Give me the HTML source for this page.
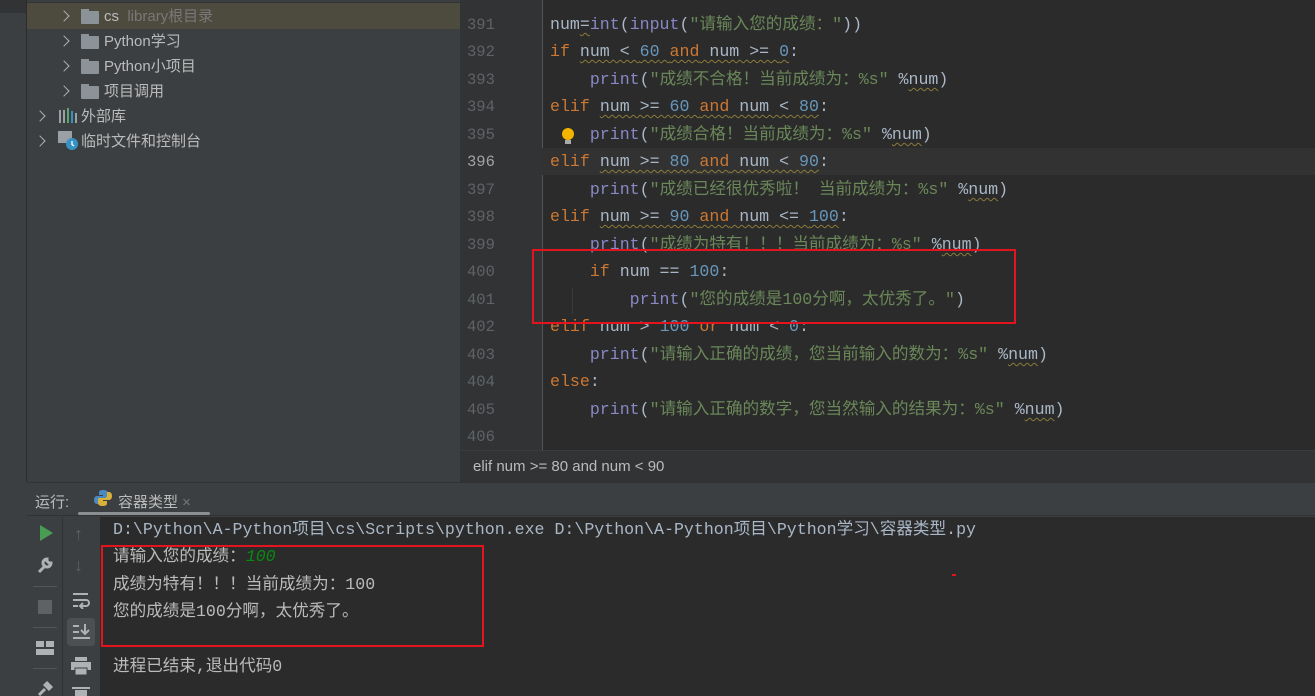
<!DOCTYPE html>
<html><head><meta charset="utf-8"><style>
*{margin:0;padding:0;box-sizing:border-box}
body{width:1315px;height:696px;overflow:hidden;background:#3c3f41;position:relative;font-family:"Liberation Sans","Noto Sans CJK SC",sans-serif;color:#bbbbbb}
.abs{position:absolute}
.mono{font-family:"Liberation Mono","Noto Sans CJK SC",monospace;font-size:16.6px;white-space:pre;line-height:20px;height:20px}
.tree{font-size:15px;color:#bbbbbb;white-space:nowrap;line-height:18px}
.chev{width:8px;height:8px;border-right:1.6px solid #aeb1b4;border-bottom:1.6px solid #aeb1b4;transform:rotate(-45deg)}
.fold{width:18px;height:13px;background:#8c9398;border-radius:1px}
.fold:before{content:"";position:absolute;left:0;top:-2px;width:8px;height:3px;background:#8c9398}
.ln{color:#606366;font-family:"Liberation Mono",monospace;font-size:15.5px;left:467px;line-height:18px}
.k{color:#cc7832}.n{color:#6897bb}.s{color:#6a8759}.f{color:#8888c6}.t{color:#a9b7c6}
.u{text-decoration:underline wavy #8a7a3a;text-underline-offset:3px;text-decoration-thickness:1px}
</style></head><body>
<div class="abs" style="left:0;top:0;width:26px;height:696px;background:#3c3f41"></div>
<div class="abs" style="left:0;top:0;width:26px;height:13px;background:#313335"></div>
<div class="abs" style="left:26px;top:0;width:1px;height:482px;background:#2b2b2b"></div>
<div class="abs" style="left:27px;top:0;width:433px;height:3px;background:#3c3f41;border-bottom:1px solid #323232"></div>
<div class="abs" style="left:27px;top:3px;width:433px;height:26px;background:#4d4a3e"></div>
<div class="abs chev" style="left:60px;top:12px"></div><div class="abs fold" style="left:81px;top:11px"></div>
<div class="abs tree" style="left:104px;top:8px">cs&nbsp; <span style="color:#787878">library根目录</span></div>
<div class="abs chev" style="left:60px;top:37px"></div><div class="abs fold" style="left:81px;top:36px"></div>
<div class="abs tree" style="left:104px;top:33px">Python学习</div>
<div class="abs chev" style="left:60px;top:62px"></div><div class="abs fold" style="left:81px;top:61px"></div>
<div class="abs tree" style="left:104px;top:58px">Python小项目</div>
<div class="abs chev" style="left:60px;top:87px"></div><div class="abs fold" style="left:81px;top:86px"></div>
<div class="abs tree" style="left:104px;top:83px">项目调用</div>
<div class="abs chev" style="left:36px;top:112px"></div>
<svg class="abs" style="left:59px;top:108px" width="20" height="16"><rect x="0" y="2" width="2" height="13" fill="#9aa0a6"/><rect x="4" y="2" width="2" height="13" fill="#9aa0a6"/><rect x="8" y="0" width="2" height="15" fill="#59a869"/><rect x="12" y="3" width="2" height="12" fill="#3592c4"/><rect x="16" y="5" width="2" height="10" fill="#9aa0a6"/></svg>
<div class="abs tree" style="left:81px;top:108px">外部库</div>
<div class="abs chev" style="left:36px;top:137px"></div>
<svg class="abs" style="left:58px;top:131px" width="22" height="20"><rect x="0" y="0" width="14" height="12" fill="#9aa0a6"/><circle cx="14" cy="13" r="6" fill="#3592c4"/><path d="M14 10v3.5l2 1.5" stroke="#fff" stroke-width="1.3" fill="none"/></svg>
<div class="abs tree" style="left:81px;top:133px">临时文件和控制台</div>
<div class="abs" style="left:460px;top:0;width:855px;height:450px;background:#2b2b2b"></div>
<div class="abs" style="left:460px;top:0;width:82px;height:450px;background:#313335"></div>
<div class="abs" style="left:542px;top:0;width:1px;height:450px;background:#555555"></div>
<div class="abs" style="left:460px;top:148px;width:855px;height:27px;background:#323232"></div>
<div class="abs" style="left:460px;top:148px;width:82px;height:27px;background:#313335"></div>
<div class="ln abs" style="top:16px">391</div><div class="ln abs" style="top:43px">392</div><div class="ln abs" style="top:71px">393</div><div class="ln abs" style="top:98px">394</div><div class="ln abs" style="top:126px">395</div><div class="ln abs" style="top:153px;color:#a4a3a3">396</div><div class="ln abs" style="top:181px">397</div><div class="ln abs" style="top:208px">398</div><div class="ln abs" style="top:236px">399</div><div class="ln abs" style="top:263px">400</div><div class="ln abs" style="top:291px">401</div><div class="ln abs" style="top:318px">402</div><div class="ln abs" style="top:346px">403</div><div class="ln abs" style="top:373px">404</div><div class="ln abs" style="top:401px">405</div><div class="ln abs" style="top:428px">406</div>
<div class="abs mono t" style="left:550px;top:15px">num<span class="u">=</span><span class="f">int</span>(<span class="f">input</span>(<span class="s">"请输入您的成绩："</span>))</div>
<div class="abs mono t" style="left:550px;top:42px"><span class="k">if</span> <span class="u">num &lt; <span class="n">60</span> <span class="k">and</span> num &gt;= <span class="n">0</span></span>:</div>
<div class="abs mono t" style="left:550px;top:70px">    <span class="f">print</span>(<span class="s">"成绩不合格！当前成绩为：%s"</span> %<span class="u">num</span>)</div>
<div class="abs mono t" style="left:550px;top:97px"><span class="k">elif</span> <span class="u">num &gt;= <span class="n">60</span> <span class="k">and</span> num &lt; <span class="n">80</span></span>:</div>
<div class="abs mono t" style="left:550px;top:125px">    <span class="f">print</span>(<span class="s">"成绩合格！当前成绩为：%s"</span> %<span class="u">num</span>)</div>
<svg class="abs" style="left:560px;top:127px" width="16" height="20"><circle cx="8" cy="7" r="6" fill="#f4b400"/><rect x="5" y="13" width="6" height="4" fill="#aaa"/></svg>
<div class="abs mono t" style="left:550px;top:152px"><span class="k">elif</span> <span class="u">num &gt;= <span class="n">80</span> <span class="k">and</span> num &lt; <span class="n">90</span></span>:</div>
<div class="abs mono t" style="left:550px;top:180px">    <span class="f">print</span>(<span class="s">"成绩已经很优秀啦！ 当前成绩为：%s"</span> %<span class="u">num</span>)</div>
<div class="abs mono t" style="left:550px;top:207px"><span class="k">elif</span> <span class="u">num &gt;= <span class="n">90</span> <span class="k">and</span> num &lt;= <span class="n">100</span></span>:</div>
<div class="abs mono t" style="left:550px;top:235px">    <span class="f">print</span>(<span class="s">"成绩为特有！！！当前成绩为：%s"</span> %<span class="u">num</span>)</div>
<div class="abs mono t" style="left:550px;top:262px">    <span class="k">if</span> num == <span class="n">100</span>:</div>
<div class="abs mono t" style="left:550px;top:290px">        <span class="f">print</span>(<span class="s">"您的成绩是100分啊，太优秀了。"</span>)</div>
<div class="abs mono t" style="left:550px;top:317px"><span class="k">elif</span> num &gt; <span class="n">100</span> <span class="k">or</span> num &lt; <span class="n">0</span>:</div>
<div class="abs mono t" style="left:550px;top:345px">    <span class="f">print</span>(<span class="s">"请输入正确的成绩，您当前输入的数为：%s"</span> %<span class="u">num</span>)</div>
<div class="abs mono t" style="left:550px;top:372px"><span class="k">else</span>:</div>
<div class="abs mono t" style="left:550px;top:400px">    <span class="f">print</span>(<span class="s">"请输入正确的数字，您当然输入的结果为：%s"</span> %<span class="u">num</span>)</div>
<div class="abs" style="left:572px;top:288px;width:1px;height:26px;background:#3b3b3b"></div>
<div class="abs" style="left:532px;top:249px;width:484px;height:75px;border:2px solid #e3141e"></div>
<div class="abs" style="left:460px;top:450px;width:855px;height:32px;background:#313335;border-top:1px solid #3c3c3c"></div>
<div class="abs" style="left:473px;top:458px;font-size:15px;color:#bbbbbb">elif num &gt;= 80 and num &lt; 90</div>
<div class="abs" style="left:27px;top:482px;width:1288px;height:1px;background:#323232"></div>
<div class="abs" style="left:27px;top:483px;width:1288px;height:33px;background:#3c3f41;border-bottom:1px solid #323232"></div>
<div class="abs" style="left:35px;top:491px;font-size:15px">运行:</div>
<svg class="abs" style="left:94px;top:489px" width="18" height="18"><path d="M9 1c-4 0-4 2-4 3v2h4v1H3c-2 0-3 2-3 4s1 4 3 4h2v-3c0-2 1-3 3-3h4c2 0 2-1 2-2V4c0-2-2-3-5-3z" fill="#4a89c2"/><path d="M9 17c4 0 4-2 4-3v-2H9v-1h6c2 0 3-2 3-4s-1-4-3-4h-2v3c0 2-1 3-3 3H6c-2 0-2 1-2 2v3c0 2 2 3 5 3z" fill="#d8b13a"/></svg>
<div class="abs" style="left:118px;top:491px;font-size:15px">容器类型 <span style="color:#777">×</span></div>
<div class="abs" style="left:78px;top:512px;width:132px;height:3px;background:#8c8f91;border-radius:2px"></div>
<div class="abs" style="left:27px;top:517px;width:73px;height:179px;background:#3c3f41"></div>
<div class="abs" style="left:62px;top:517px;width:1px;height:179px;background:#323232"></div>
<div class="abs" style="left:100px;top:517px;width:1215px;height:179px;background:#2b2b2b"></div>
<svg class="abs" style="left:38px;top:524px" width="16" height="18"><path d="M2 1l13 8-13 8z" fill="#499c54"/></svg>
<svg class="abs" style="left:36px;top:556px" width="18" height="18"><path d="M3 16l7-7M11 3a4 4 0 1 0 4 4l-2 0-2-2z" stroke="#afb1b3" stroke-width="3" fill="none"/></svg>
<div class="abs" style="left:33px;top:586px;width:24px;height:1px;background:#555"></div>
<div class="abs" style="left:38px;top:600px;width:14px;height:14px;background:#5f6163"></div>
<div class="abs" style="left:33px;top:627px;width:24px;height:1px;background:#555"></div>
<svg class="abs" style="left:36px;top:641px" width="18" height="15"><rect x="0" y="0" width="8" height="6" fill="#afb1b3"/><rect x="10" y="0" width="8" height="6" fill="#afb1b3"/><rect x="0" y="8" width="18" height="6" fill="#afb1b3"/></svg>
<div class="abs" style="left:33px;top:668px;width:24px;height:1px;background:#555"></div>
<svg class="abs" style="left:36px;top:680px" width="18" height="16"><path d="M3 15l6-6M8 4l6 6M10 2l6 6" stroke="#afb1b3" stroke-width="3"/></svg>
<div class="abs" style="left:74px;top:524px;color:#5f6163;font-size:18px">↑</div>
<div class="abs" style="left:74px;top:555px;color:#5f6163;font-size:18px">↓</div>
<svg class="abs" style="left:71px;top:591px" width="20" height="18"><path d="M2 3h15M2 9h13a3 3 0 0 1 0 6h-5M2 15h5M12 12l-3 3 3 3" stroke="#afb1b3" stroke-width="2" fill="none"/></svg>
<div class="abs" style="left:67px;top:618px;width:28px;height:28px;background:#4c5052;border-radius:4px"></div>
<svg class="abs" style="left:72px;top:622px" width="20" height="20"><path d="M1 4h6M1 10h6M1 16h17M13 2v10M9 8l4 4 4-4" stroke="#afb1b3" stroke-width="2" fill="none"/></svg>
<svg class="abs" style="left:71px;top:657px" width="20" height="18"><rect x="4" y="0" width="12" height="4" fill="#afb1b3"/><rect x="0" y="5" width="20" height="8" fill="#afb1b3"/><rect x="4" y="11" width="12" height="7" fill="#afb1b3" stroke="#3c3f41"/></svg>
<svg class="abs" style="left:72px;top:685px" width="18" height="11"><rect x="0" y="2" width="18" height="2" fill="#afb1b3"/><rect x="3" y="5" width="12" height="6" fill="#afb1b3"/></svg>
<div class="abs mono" style="left:113px;top:520px;color:#a9b7c6">D:\Python\A-Python项目\cs\Scripts\python.exe D:\Python\A-Python项目\Python学习\容器类型.py</div>
<div class="abs mono" style="left:113px;top:547px;color:#bbbbbb">请输入您的成绩：<span style="color:#098a0f;font-style:italic">100</span></div>
<div class="abs mono" style="left:113px;top:575px;color:#bbbbbb">成绩为特有！！！当前成绩为：100</div>
<div class="abs mono" style="left:113px;top:602px;color:#bbbbbb">您的成绩是100分啊，太优秀了。</div>
<div class="abs mono" style="left:113px;top:657px;color:#bbbbbb">进程已结束,退出代码0</div>
<div class="abs" style="left:101px;top:545px;width:383px;height:102px;border:2px solid #e3141e"></div>
<div class="abs" style="left:952px;top:574px;width:4px;height:2px;background:#e3141e"></div>
</body></html>
